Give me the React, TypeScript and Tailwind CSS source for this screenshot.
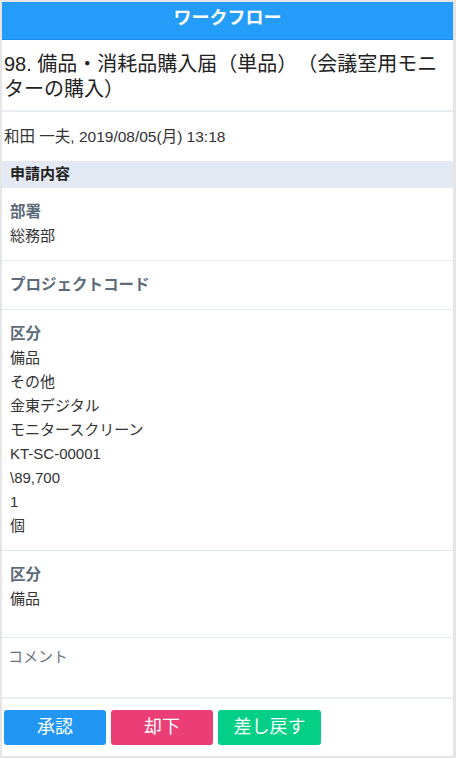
import React from 'react';

const font = { fontFamily: '"Liberation Sans", "Noto Sans CJK JP", sans-serif' };

const Field: React.FC<{ label: string; values?: string[]; extraPad?: boolean }> = ({ label, values = [], extraPad }) => (
    <div className={`border-b border-[#e4ebf2] px-[8px] pt-3 ${extraPad ? 'pb-[26px]' : 'pb-3'} text-[15px] leading-[24px]`}>
        <div className="font-bold text-[#5c6b7a] text-[15.5px]">{label}</div>
        {values.map((v, i) => (
            <div key={i} className="text-[#333333]">{v}</div>
        ))}
    </div>
);

const App: React.FC = () => {
    return (
        <div className="w-[456px] h-[758px] bg-[#e5e5e5] pl-[2px] pr-[3px] pt-[2px] pb-[2px]" style={font}>
            <div className="h-full bg-white flex flex-col">
                <header className="h-[38px] bg-[#249cf9] border-b border-[#1a8ee8] flex items-center justify-center">
                    <h1 className="text-white font-bold text-[18px] leading-none -mt-[6px]">ワークフロー</h1>
                </header>

                <div className="border-b-2 border-[#e8eef4] px-[2px] pt-[12px] pb-[8px] text-[20px] leading-[25px] text-[#222222] [text-spacing-trim:space-all]">
                    98. 備品・消耗品購入届（単品）（会議室用モニターの購入）
                </div>

                <div className="px-[2px] h-[49px] flex items-center text-[15.5px] text-[#333333]">
                    和田 一夫, 2019/08/05(月) 13:18
                </div>

                <div className="h-[27px] bg-[#e3eaf3] px-[8px] flex items-center text-[15px] font-bold text-[#222222]">
                    申請内容
                </div>

                <Field label="部署" values={['総務部']} />
                <Field label="プロジェクトコード" />
                <Field
                    label="区分"
                    values={['備品', 'その他', '金東デジタル', 'モニタースクリーン', 'KT-SC-00001', '\\89,700', '1', '個']}
                />
                <Field label="区分" values={['備品']} extraPad />

                <div className="h-[61px] border-b-2 border-[#e8eef4] px-[6px] pt-[8px] text-[15px] text-[#6b7684]">
                    コメント
                </div>

                <div className="flex gap-[5px] px-[2px] pt-[11px]">
                    <button className="w-[102px] h-[35px] rounded-[3px] bg-[#2196f3] text-white text-[18px]">承認</button>
                    <button className="w-[102px] h-[35px] rounded-[3px] bg-[#ec3e76] text-white text-[18px]">却下</button>
                    <button className="w-[103px] h-[35px] rounded-[3px] bg-[#03cf86] text-white text-[18px]">差し戻す</button>
                </div>
            </div>
        </div>
    );
};

export default App;
